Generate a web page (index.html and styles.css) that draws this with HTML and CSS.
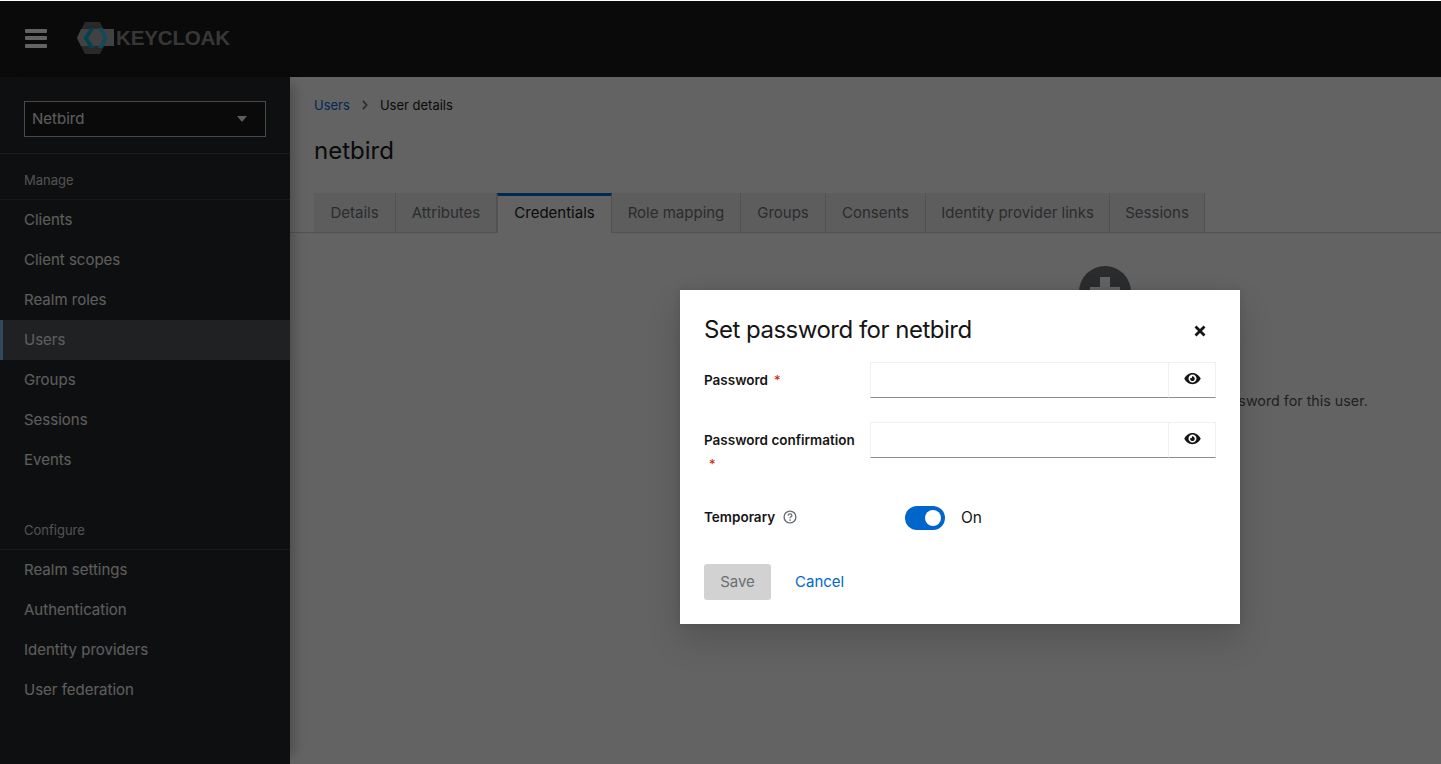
FILE: index.html
```html
<!DOCTYPE html>
<html lang="en">
<head>
<meta charset="utf-8">
<title>Keycloak - Users</title>
<link rel="stylesheet" href="styles.css">
</head>
<body>
<div class="page">
  <header class="masthead">
    <button class="burger" aria-label="Menu"><span></span><span></span><span></span></button>
    <div class="logo">
      <svg class="logo-mark" viewBox="0 0 38 32" width="38" height="32">
        <path d="M8 0H23L31 16L23 32H8L0 16Z" fill="#666"/>
        <path d="M0 16L4 7H37V24H4Z" fill="#a8a8a8"/>
        <path d="M13 6H17.500L11 16L17.500 26H13L6.500 16Z" fill="#00a3d6"/>
        <path d="M21 6H25.500L31 16L25.500 26H21L26.500 16Z" fill="#2cbcea"/>
      </svg>
      <span class="logo-text">KEYCLOAK</span>
    </div>
  </header>
  <div class="body-row">
    <aside class="sidebar">
      <div class="realm-wrap">
        <div class="realm-select"><span>Netbird</span><i class="caret"></i></div>
      </div>
      <div class="nav-title">Manage</div>
      <nav class="nav-list">
        <a class="nav-item">Clients</a>
        <a class="nav-item">Client scopes</a>
        <a class="nav-item">Realm roles</a>
        <a class="nav-item current">Users</a>
        <a class="nav-item">Groups</a>
        <a class="nav-item">Sessions</a>
        <a class="nav-item">Events</a>
      </nav>
      <div class="nav-title second">Configure</div>
      <nav class="nav-list">
        <a class="nav-item">Realm settings</a>
        <a class="nav-item">Authentication</a>
        <a class="nav-item">Identity providers</a>
        <a class="nav-item">User federation</a>
      </nav>
    </aside>
    <main class="main">
      <div class="crumbs">
        <a class="crumb-link">Users</a>
        <svg class="crumb-sep" viewBox="0 0 8 12" width="8" height="10"><path d="M1.500 1L6 6L1.500 11" fill="none" stroke="#6a6e73" stroke-width="2"/></svg>
        <span>User details</span>
      </div>
      <h1 class="page-title">netbird</h1>
      <div class="tabs">
        <span class="tab w-details">Details</span>
        <span class="tab w-attr">Attributes</span>
        <span class="tab active w-cred">Credentials</span>
        <span class="tab w-role">Role mapping</span>
        <span class="tab w-groups">Groups</span>
        <span class="tab w-cons">Consents</span>
        <span class="tab w-idp">Identity provider links</span>
        <span class="tab w-sess">Sessions</span>
      </div>
      <section class="empty">
        <div class="empty-icon"></div>
        <h2 class="empty-title">No credentials</h2>
        <p class="empty-text">This user does not have any credentials. You can set a password for this user.</p>
      </section>
    </main>
  </div>
  <div class="backdrop"></div>
  <div class="modal">
    <div class="modal-head">
      <h2 class="modal-title">Set password for netbird</h2>
      <svg class="close" viewBox="0 0 12 12" width="12" height="12"><path d="M1.500 1.500L10.500 10.500M10.500 1.500L1.500 10.500" stroke="#151515" stroke-width="2.800" fill="none"/></svg>
    </div>
    <div class="form-row">
      <div class="label"><b>Password</b><em class="req">*</em></div>
      <div class="input-group">
        <div class="input"></div>
        <div class="eye-btn">
          <svg viewBox="0 0 576 512" width="17" height="15"><path d="M288 64C160 64 56 150 8 256c48 106 152 192 280 192s232-86 280-192C520 150 416 64 288 64zm0 328c-75 0-136-61-136-136s61-136 136-136 136 61 136 136-61 136-136 136zm0-216c-7 0-14 1-21 3 12 17 10 40-5 55s-38 17-55 5c-10 35 4 73 36 93s73 15 99-11 30-67 11-99c-15-25-41-46-65-46z" fill="#151515"/></svg>
        </div>
      </div>
    </div>
    <div class="form-row">
      <div class="label"><b>Password confirmation</b><em class="req block">*</em></div>
      <div class="input-group">
        <div class="input"></div>
        <div class="eye-btn">
          <svg viewBox="0 0 576 512" width="17" height="15"><path d="M288 64C160 64 56 150 8 256c48 106 152 192 280 192s232-86 280-192C520 150 416 64 288 64zm0 328c-75 0-136-61-136-136s61-136 136-136 136 61 136 136-61 136-136 136zm0-216c-7 0-14 1-21 3 12 17 10 40-5 55s-38 17-55 5c-10 35 4 73 36 93s73 15 99-11 30-67 11-99c-15-25-41-46-65-46z" fill="#151515"/></svg>
        </div>
      </div>
    </div>
    <div class="toggle-row">
      <div class="label temp"><b>Temporary</b>
        <svg class="help" viewBox="0 0 14 14" width="14" height="14"><circle cx="7" cy="7" r="5.900" fill="none" stroke="#6a6e73" stroke-width="1.400"/><path d="M5.100 5.600C5.200 4.500 6 3.900 7 3.900C8.100 3.900 8.900 4.600 8.900 5.500C8.900 6.800 7 6.900 7 8.300" fill="none" stroke="#6a6e73" stroke-width="1.300"/><circle cx="7" cy="10" r=".85" fill="#6a6e73"/></svg>
      </div>
      <div class="switch"><i></i></div>
      <span class="switch-label">On</span>
    </div>
    <div class="actions">
      <span class="btn-save">Save</span>
      <a class="btn-cancel">Cancel</a>
    </div>
  </div>
</div>
</body>
</html>
```
FILE: styles.css
```css
* { box-sizing: border-box; }
html, body { margin: 0; padding: 0; height: 100%; }
body { font-family: "Inter", "Liberation Sans", sans-serif; font-size: 16px; color: #151515; background: #fff; overflow: hidden; }
.page { position: relative; width: 1441px; height: 764px; overflow: hidden; display: flex; flex-direction: column; padding-top: 1px; background: #fff; }

.masthead { height: 76px; background: #151515; display: flex; align-items: center; flex: none; padding-bottom: 2px; }
.burger { width: 22px; height: 19px; margin-left: 25px; padding: 0; border: 0; background: none; display: flex; flex-direction: column; justify-content: space-between; }
.burger span { display: block; height: 4px; border-radius: 1px; background: #fff; }
.logo { display: flex; align-items: center; margin-left: 30px; }
.logo-mark { display: block; margin-right: 1px; }
.logo-text { font-family: "Liberation Sans", sans-serif; font-weight: 700; font-size: 20.600px; letter-spacing: -.2px; color: #8c8c8c; padding-bottom: 1px; }

.body-row { flex: 1; display: flex; min-height: 0; }
.sidebar { width: 290px; flex: none; background: #212427; color: #fff; font-size: 16px; position: relative; box-shadow: 12px 0 12px -8px rgba(3,3,3,.25); }
.realm-wrap { padding: 24px 24px 16px; border-bottom: 1px solid #3c3f42; height: 77px; }
.realm-select { height: 36px; background: #151515; border: 1px solid #b8bbbe; display: flex; align-items: center; justify-content: space-between; padding: 0 18px 2px 7px; font-size: 15px; color: #f0f0f0; }
.caret { width: 0; height: 0; border-left: 5.500px solid transparent; border-right: 5.500px solid transparent; border-top: 6px solid #f0f0f0; margin-top: 1px; }
.nav-title { height: 46px; padding: 0 24px 11px; display: flex; align-items: flex-end; font-size: 13px; color: #d2d2d2; border-bottom: 1px solid #3c3f42; }
.nav-title.second { height: 70px; }
.nav-list { display: flex; flex-direction: column; }
.nav-item { height: 40px; display: flex; align-items: center; padding: 0 0 2px 24px; color: #f0f0f0; font-size: 15px; }
.nav-item.current { background: #4f5255; border-left: 3px solid #73bcf7; padding-left: 21px; }

.main { flex: 1; background: #fff; min-width: 0; }
.crumbs { height: 56px; padding: 16px 24px 0; display: flex; align-items: flex-start; font-size: 13px; line-height: 24px; }
.crumbs span { color: #151515; }
.crumb-link { color: #06c; }
.crumb-sep { margin: 7px 11px 0 11px; }
.page-title { margin: 0; padding: 1px 0 0 24px; font-size: 24px; font-weight: 400; line-height: 34px; height: 60px; }
.tabs { display: flex; height: 40px; padding-left: 24px; border-bottom: 1px solid #d2d2d2; }
.tab { height: 39px; flex: none; display: flex; align-items: center; justify-content: center; padding-bottom: 1px; background: #f0f0f0; border-right: 1px solid #d2d2d2; color: #6a6e73; font-size: 15px; }
.tab.active { background: #fff; color: #151515; border-top: 3px solid #06c; border-left: 1px solid #d2d2d2; border-right: 1px solid #d2d2d2; height: 40px; padding-bottom: 4px; position: relative; }
.w-details { width: 82px; }
.w-attr { width: 101px; }
.w-cred { width: 115px; }
.w-role { width: 129px; }
.w-groups { width: 85px; }
.w-cons { width: 100px; }
.w-idp { width: 184px; }
.w-sess { width: 95px; }
.empty { padding: 33px 0 0 479px; display: flex; flex-direction: column; align-items: center; }
.empty-icon { width: 52px; height: 52px; border-radius: 50%; background: #6a6e73; flex: none; position: relative; }
.empty-icon::before, .empty-icon::after { content: ""; position: absolute; background: #fff; }
.empty-icon::before { left: 21px; top: 11px; width: 10px; height: 30px; }
.empty-icon::after { left: 11px; top: 21px; width: 30px; height: 10px; }
.empty-title { margin: 24px 0 0; font-size: 20px; font-weight: 400; line-height: 28px; }
.empty-text { margin: 19px 0 0; font-size: 14.300px; line-height: 24px; white-space: nowrap; color: #4f5255; }

.backdrop { position: absolute; inset: 0; top: 1px; background: rgba(3,3,3,.62); }
.modal { position: absolute; left: 680px; top: 290px; width: 560px; height: 334px; background: #fff; padding: 24px; box-shadow: 0 16px 32px rgba(3,3,3,.16), 0 0 8px rgba(3,3,3,.1); }
.modal-head { display: flex; align-items: center; justify-content: space-between; height: 32px; padding-right: 10px; margin-bottom: 16px; }
.modal-title { margin: 0; font-size: 24px; font-weight: 400; line-height: 32px; letter-spacing: -.5px; }
.close { margin-top: 2px; }
.form-row { display: flex; height: 60px; }
.label { width: 166px; flex: none; font-size: 13.500px; line-height: 21px; padding-top: 8px; }
.label b { font-weight: 600; }
.req { font-style: normal; color: #c9190b; margin-left: 6px; font-size: 13px; }
.req.block { display: block; margin: 3px 0 0 5px; }
.input-group { flex: 1; display: flex; height: 36px; }
.input { flex: 1; border: 1px solid #f0f0f0; border-bottom-color: #8a8d90; }
.eye-btn { width: 47px; flex: none; display: flex; align-items: center; justify-content: center; border: 1px solid #f0f0f0; border-left: 0; border-bottom-color: #8a8d90; padding-bottom: 3px; }
.toggle-row { display: flex; align-items: center; height: 24px; margin-top: 24px; }
.label.temp { width: 201px; padding: 0 0 2px; display: flex; align-items: center; }
.help { margin-left: 8px; }
.switch { width: 40px; height: 24px; border-radius: 12px; background: #06c; display: flex; align-items: center; justify-content: flex-end; padding-right: 4px; }
.switch i { width: 16px; height: 16px; border-radius: 50%; background: #fff; }
.switch-label { margin-left: 16px; font-size: 15.500px; padding-bottom: 2px; }
.actions { display: flex; align-items: center; margin-top: 34px; }
.btn-save { width: 67px; height: 36px; border-radius: 3px; background: #d2d2d2; color: #6a6e73; display: flex; align-items: center; justify-content: center; padding-bottom: 2px; font-size: 15px; }
.btn-cancel { margin-left: 24px; color: #06c; font-size: 15px; padding-bottom: 2px; }
```
